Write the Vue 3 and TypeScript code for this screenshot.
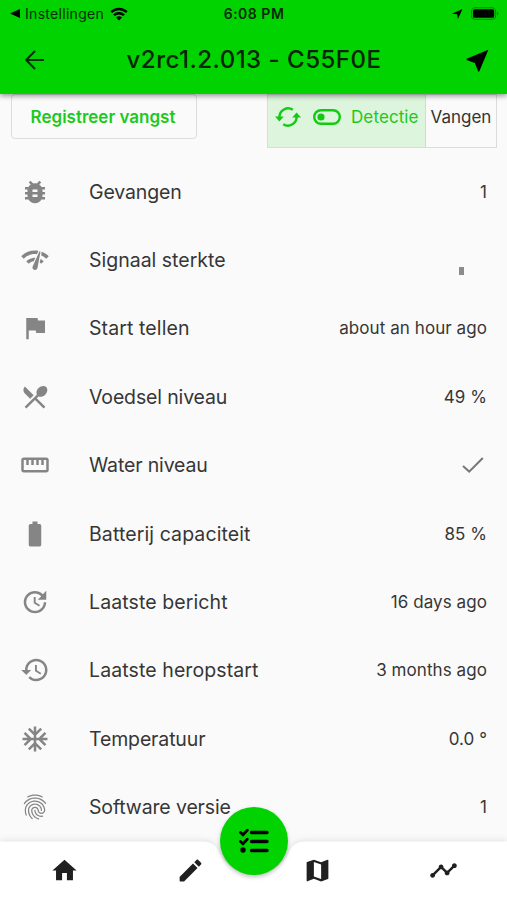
<script setup lang="ts">
interface Row {
  label: string
  icon: string
  value?: string
  kind?: 'signal' | 'check'
  tracking: 'tight' | 'normal' | 'wide'
}

const rows: Row[] = [
  { label: 'Gevangen', value: '1', tracking: 'tight', icon: 'M20 8h-2.81c-.45-.78-1.07-1.45-1.82-1.96L17 4.41 15.59 3l-2.17 2.17C12.96 5.06 12.49 5 12 5c-.49 0-.96.06-1.41.17L8.41 3 7 4.41l1.62 1.63C7.88 6.55 7.26 7.22 6.81 8H4v2h2.09c-.05.33-.09.66-.09 1v1H4v2h2v1c0 .34.04.67.09 1H4v2h2.81c1.04 1.79 2.97 3 5.19 3s4.15-1.21 5.19-3H20v-2h-2.09c.05-.33.09-.66.09-1v-1h2v-2h-2v-1c0-.34-.04-.67-.09-1H20V8zm-6 8h-4v-2h4v2zm0-4h-4v-2h4v2z' },
  { label: 'Signaal sterkte', kind: 'signal', tracking: 'normal', icon: 'M15.9 5c-.17 0-.32.09-.41.23l-.07.15-5.18 11.65c-.16.29-.26.61-.26.96 0 1.11.9 2.01 2.01 2.01.96 0 1.77-.68 1.96-1.59l.01-.03L16.4 5.5c0-.28-.22-.5-.5-.5zM1 9l2 2c2.88-2.88 6.79-4.08 10.53-3.62l1.19-2.68C9.89 3.84 4.74 5.27 1 9zm20 2l2-2c-1.64-1.64-3.55-2.82-5.59-3.57l-.53 2.82c1.5.62 2.9 1.53 4.12 2.75zm-4 4l2-2c-.8-.8-1.7-1.42-2.66-1.89l-.55 2.92c.42.27.83.59 1.21.97zM5 13l2 2c1.13-1.13 2.56-1.79 4.03-2l1.28-2.88c-2.63-.08-5.3.87-7.31 2.88z' },
  { label: 'Start tellen', value: 'about an hour ago', tracking: 'wide', icon: 'M14.4 6L14 4H5v17h2v-7h5.6l.4 2h7V6z' },
  { label: 'Voedsel niveau', value: '49 %', tracking: 'tight', icon: 'M8.1 13.34l2.83-2.83L3.91 3.5c-1.56 1.56-1.56 4.09 0 5.66l4.19 4.18zm6.78-1.81c1.53.71 3.68.21 5.27-1.38 1.91-1.91 2.28-4.65.81-6.12-1.46-1.46-4.2-1.1-6.12.81-1.59 1.59-2.09 3.74-1.38 5.27L3.7 19.87l1.41 1.41L12 14.41l6.88 6.88 1.41-1.41L13.41 13l1.47-1.47z' },
  { label: 'Water niveau', kind: 'check', tracking: 'tight', icon: 'M21 6H3c-1.1 0-2 .9-2 2v8c0 1.1.9 2 2 2h18c1.1 0 2-.9 2-2V8c0-1.1-.9-2-2-2zm0 10H3V8h2v4h2V8h2v4h2V8h2v4h2V8h2v4h2V8h2v8z' },
  { label: 'Batterij capaciteit', value: '85 %', tracking: 'wide', icon: 'M15.67 4H14V2h-4v2H8.33C7.6 4 7 4.6 7 5.33v15.33C7 21.4 7.6 22 8.33 22h7.33c.74 0 1.34-.6 1.34-1.33V5.33C17 4.6 16.4 4 15.67 4z' },
  { label: 'Laatste bericht', value: '16 days ago', tracking: 'wide', icon: 'M21 10.12h-6.78l2.74-2.82c-2.73-2.7-7.15-2.8-9.88-.1-2.73 2.71-2.73 7.08 0 9.79s7.15 2.71 9.88 0C18.32 15.65 19 14.08 19 12.1h2c0 1.98-.88 4.55-2.64 6.29-3.51 3.48-9.21 3.48-12.72 0-3.5-3.47-3.53-9.11-.02-12.58s9.14-3.47 12.65 0L21 3v7.12zM12.5 8v4.25l3.5 2.08-.72 1.21L11 13V8h1.5z' },
  { label: 'Laatste heropstart', value: '3 months ago', tracking: 'wide', icon: 'M13 3c-4.97 0-9 4.03-9 9H1l3.89 3.89.07.14L9 12H6c0-3.87 3.13-7 7-7s7 3.13 7 7-3.13 7-7 7c-1.93 0-3.68-.79-4.94-2.06l-1.42 1.42C8.27 19.99 10.51 21 13 21c4.97 0 9-4.03 9-9s-4.03-9-9-9zm-1 5v5l4.28 2.54.72-1.21-3.5-2.08V8H12z' },
  { label: 'Temperatuur', value: '0.0 °', tracking: 'tight', icon: 'M22 11h-4.17l3.24-3.24-1.41-1.42L15 11h-2V9l4.66-4.66-1.42-1.41L13 6.17V2h-2v4.17L7.76 2.93 6.34 4.34 11 9v2H9L4.34 6.34 2.93 7.76 6.17 11H2v2h4.17l-3.24 3.24 1.41 1.42L9 13h2v2l-4.66 4.66 1.42 1.41L11 17.83V22h2v-4.17l3.24 3.24 1.42-1.41L13 15v-2h2l4.66 4.66 1.41-1.42L17.83 13H22z' },
  { label: 'Software versie', value: '1', tracking: 'tight', icon: 'M17.81 4.47c-.08 0-.16-.02-.23-.06C15.66 3.42 14 3 12.01 3c-1.98 0-3.86.47-5.57 1.41-.24.13-.54.04-.68-.2-.13-.24-.04-.55.2-.68C7.82 2.52 9.86 2 12.01 2c2.13 0 3.99.47 6.03 1.52.25.13.34.43.21.67-.09.18-.26.28-.44.28zM3.5 9.72c-.1 0-.2-.03-.29-.09-.23-.16-.28-.47-.12-.7.99-1.4 2.25-2.5 3.75-3.27C9.98 4.04 14 4.03 17.15 5.65c1.5.77 2.76 1.86 3.75 3.25.16.22.11.54-.12.7-.23.16-.54.11-.7-.12-.9-1.26-2.04-2.25-3.39-2.94-2.87-1.47-6.54-1.47-9.4.01-1.36.7-2.5 1.7-3.4 2.96-.08.14-.23.21-.39.21zm6.25 12.07c-.13 0-.26-.05-.35-.15-.87-.87-1.34-1.43-2.01-2.64-.69-1.23-1.05-2.73-1.05-4.34 0-2.97 2.54-5.39 5.66-5.39s5.66 2.42 5.66 5.39c0 .28-.22.5-.5.5s-.5-.22-.5-.5c0-2.42-2.09-4.39-4.66-4.39-2.57 0-4.66 1.97-4.66 4.39 0 1.44.32 2.77.93 3.85.64 1.15 1.08 1.64 1.85 2.42.19.2.19.51 0 .71-.11.1-.24.15-.37.15zm7.17-1.85c-1.19 0-2.24-.3-3.1-.89-1.49-1.01-2.38-2.65-2.38-4.39 0-.28.22-.5.5-.5s.5.22.5.5c0 1.41.72 2.74 1.94 3.56.71.48 1.54.71 2.54.71.24 0 .64-.03 1.04-.1.27-.05.53.13.58.41.05.27-.13.53-.41.58-.57.11-1.07.12-1.21.12zM14.91 22c-.04 0-.09-.01-.13-.02-1.59-.44-2.63-1.03-3.72-2.1-1.4-1.39-2.17-3.24-2.17-5.22 0-1.62 1.38-2.94 3.08-2.94 1.7 0 3.08 1.32 3.08 2.94 0 1.07.93 1.94 2.08 1.94s2.08-.87 2.08-1.94c0-3.77-3.25-6.83-7.25-6.83-2.84 0-5.44 1.58-6.61 4.03-.39.81-.59 1.76-.59 2.8 0 .78.07 2.01.67 3.61.1.26-.03.55-.29.64-.26.1-.55-.04-.64-.29-.49-1.31-.73-2.61-.73-3.96 0-1.2.23-2.29.68-3.24 1.33-2.79 4.28-4.6 7.51-4.6 4.55 0 8.25 3.51 8.25 7.83 0 1.62-1.38 2.94-3.08 2.94s-3.08-1.32-3.08-2.94c0-1.07-.93-1.94-2.08-1.94s-2.08.87-2.08 1.94c0 1.71.66 3.31 1.87 4.51.95.94 1.86 1.46 3.27 1.85.27.07.42.35.35.61-.05.23-.26.38-.47.38z' },
]

const tabs: string[] = [
  'M10 20v-6h4v6h5v-8h3L12 3 2 12h3v8z',
  'M3 17.46v3.04c0 .28.22.5.5.5h3.04c.13 0 .26-.05.35-.15L17.81 9.94l-3.75-3.75L3.15 17.1c-.1.1-.15.22-.15.36zM20.71 7.04c.39-.39.39-1.02 0-1.41l-2.34-2.34c-.39-.39-1.02-.39-1.41 0l-1.83 1.83 3.75 3.75 1.83-1.83z',
  'M20.5 3l-.16.03L15 5.1 9 3 3.36 4.9c-.21.07-.36.25-.36.48V20.5c0 .28.22.5.5.5l.16-.03L9 18.9l6 2.1 5.64-1.9c.21-.07.36-.25.36-.48V3.5c0-.28-.22-.5-.5-.5zM15 19l-6-2.11V5l6 2.11V19z',
  'M23 8c0 1.1-.9 2-2 2-.18 0-.35-.02-.51-.07l-3.56 3.55c.05.16.07.34.07.52 0 1.1-.9 2-2 2s-2-.9-2-2c0-.18.02-.36.07-.52l-2.55-2.55c-.16.05-.34.07-.52.07s-.36-.02-.52-.07l-4.55 4.56c.05.16.07.33.07.51 0 1.1-.9 2-2 2s-2-.9-2-2 .9-2 2-2c.18 0 .35.02.51.07l4.56-4.55C8.02 9.36 8 9.18 8 9c0-1.1.9-2 2-2s2 .9 2 2c0 .18-.02.36-.07.52l2.55 2.55c.16-.05.34-.07.52-.07s.36.02.52.07l3.55-3.56C19.02 8.35 19 8.18 19 8c0-1.1.9-2 2-2s2 .9 2 2z',
]
</script>

<template>
  <div class="screen">
    <header class="top">
      <div class="status">
        <div class="status-left">
          <svg class="caret" viewBox="0 0 10 9"><path d="M0 4.5L10 0v9z" /></svg>
          <span class="back-app">Instellingen</span>
          <svg class="wifi" viewBox="0 0 18 14">
            <path class="arc" d="M1.2 5.2a11 11 0 0 1 15.6 0M4 8.2a7.2 7.2 0 0 1 10 0" />
            <path d="M9 13.6l-3-3a4.4 4.4 0 0 1 6 0z" />
          </svg>
        </div>
        <span class="clock">6:08 PM</span>
        <div class="status-right">
          <svg class="loc" viewBox="0 0 12 12"><path d="M11.5.5L0 5.600l5.700.7.7 5.200z" /></svg>
          <svg class="batt" viewBox="0 0 29 13">
            <rect class="shell" x=".5" y=".5" width="25" height="12" rx="3.5" />
            <rect x="2" y="2" width="22" height="9" rx="2" />
            <path class="tip" d="M27 4.3q1.5.8 1.5 2.2T27 8.7z" />
          </svg>
        </div>
      </div>
      <div class="bar">
        <svg class="back" viewBox="0 0 20 20"><path d="M19 10H1.500M10 1L1.200 10l8.800 9" /></svg>
        <h1 class="title">v2rc1.2.013 - C55F0E</h1>
        <svg class="near" viewBox="0 0 24 24"><path d="M21 3L3 10.530v.98l6.840 2.650L12.480 21h.98L21 3z" /></svg>
      </div>
    </header>

    <section class="actions">
      <button class="register"><span>Registreer vangst</span></button>
      <div class="modes">
        <div class="mode on">
          <svg class="sync" viewBox="0 0 26 20">
            <path class="line" d="M17.8 2.800A8.700 8.700 0 0 0 4.400 10M8.200 17.200A8.700 8.700 0 0 0 21.600 10" />
            <path d="M0 9.600h8.800l-4.400 5zM17.200 10.400h8.800l-4.400-5z" />
          </svg>
          <svg class="toggle" viewBox="0 0 28 16">
            <rect x="1.2" y="1.2" width="25.6" height="13.6" rx="6.8" />
            <circle cx="8" cy="8" r="3.6" />
          </svg>
          <span class="det">Detectie</span>
        </div>
        <div class="mode off"><span>Vangen</span></div>
      </div>
    </section>

    <main class="list">
      <div v-for="row in rows" :key="row.label" class="row">
        <svg class="icon" viewBox="0 0 24 24"><path :d="row.icon" /></svg>
        <span class="label" :class="row.tracking">{{ row.label }}</span>
        <span v-if="row.value" class="value">{{ row.value }}</span>
        <span v-else-if="row.kind === 'signal'" class="signal"></span>
        <svg v-else class="check" viewBox="0 0 22 16"><path d="M1 9l6.200 5.600L20.800 1" /></svg>
      </div>
    </main>

    <nav class="nav">
      <svg class="sheet" viewBox="0 0 507 62">
        <path d="M0 3.500H202Q215 3.500 218.500 13A38.500 38.500 0 0 0 289.500 13Q293 3.500 306 3.500H507V62H0z" />
      </svg>
      <div class="tabs">
        <svg v-for="tab in tabs" :key="tab" class="tab" viewBox="0 0 24 24"><path :d="tab" /></svg>
      </div>
      <div class="fab">
        <svg viewBox="0 0 30 26">
          <path class="tick" d="M1.500 4.500l2.500 2.300L8.300 2.200M1.500 13.500l2.500 2.300 4.300-4.600" />
          <circle cx="4" cy="22" r="2.700" />
          <path class="rule" d="M12.500 4.500H28M12.500 13.500H28M12.500 22.500H28" />
        </svg>
      </div>
    </nav>
  </div>
</template>

<style>
body {
  margin: 0;
  background: #fafafa;
}
</style>

<style scoped>
.screen {
  position: relative;
  display: flex;
  flex-direction: column;
  width: 507px;
  height: 900px;
  overflow: hidden;
  background: #fafafa;
  font-family: Inter, "Liberation Sans", sans-serif;
  color: #333;
}
svg {
  display: block;
  flex: none;
}
.top {
  position: relative;
  z-index: 2;
  height: 94px;
  flex: none;
  background: #00d300;
  box-shadow: 0 2px 5px rgba(0, 0, 0, 0.4);
}
.status {
  display: grid;
  grid-template-columns: 1fr auto 1fr;
  align-items: center;
  height: 27px;
  padding: 0 8px 0 10px;
  font-size: 14px;
  color: #062b06;
}
.status-left,
.status-right {
  display: flex;
  align-items: center;
}
.status-right {
  justify-content: flex-end;
  gap: 8px;
}
.caret {
  width: 10px;
  height: 9px;
}
.back-app {
  margin-left: 5px;
  letter-spacing: 0.3px;
}
.wifi {
  width: 18px;
  height: 14px;
  margin-left: 6px;
}
.arc {
  fill: none;
  stroke: #000;
  stroke-width: 2.4;
}
.clock {
  font-weight: 600;
  letter-spacing: 0.5px;
}
.status .clock {
  margin-right: 1px;
}
.loc {
  width: 11px;
  height: 12px;
}
.batt {
  width: 28px;
  height: 13px;
}
.shell {
  fill: none;
  stroke: #087c08;
}
.tip {
  fill: #087c08;
}
.bar {
  display: flex;
  align-items: center;
  justify-content: space-between;
  height: 66px;
  padding: 0 15px 0 25px;
}
.back {
  width: 20px;
  height: 20px;
  fill: none;
  stroke: #072c07;
  stroke-width: 2;
}
.title {
  margin: 0;
  font-size: 24px;
  font-weight: 500;
  line-height: 30px;
  letter-spacing: 0.5px;
  color: #072507;
}
.near {
  width: 29px;
  height: 29px;
}
.actions {
  display: flex;
  justify-content: space-between;
  align-items: flex-start;
  height: 63.5px;
  flex: none;
  padding: 0 10px 0 11px;
}
.register {
  box-sizing: border-box;
  width: 186px;
  height: 45px;
  padding: 0 2px 0 0;
  border: 1px solid #dcdcdc;
  border-radius: 4px;
  background: transparent;
  font: 600 17px/44px Inter, "Liberation Sans", sans-serif;
  color: #1cc91c;
}
.modes {
  display: flex;
  box-sizing: border-box;
  width: 230px;
  height: 54px;
  border: 1px solid #d9dcd9;
}
.mode {
  display: flex;
  align-items: center;
  box-sizing: border-box;
  padding-bottom: 9px;
  font-size: 17px;
}
.on {
  width: 158px;
  padding-left: 7px;
  border-right: 1px solid #d5d9d5;
  background: #ddf4dd;
  color: #1cc91c;
}
.off {
  flex: 1;
  justify-content: center;
  color: #333;
}
.sync {
  width: 26px;
  height: 20px;
  fill: #10cc10;
}
.line {
  fill: none;
  stroke: #10cc10;
  stroke-width: 2.4;
}
.toggle {
  width: 28px;
  height: 16px;
  margin-left: 12px;
  fill: #10cc10;
}
.toggle rect {
  fill: none;
  stroke: #10cc10;
  stroke-width: 2.4;
}
.det {
  margin-left: 10px;
  letter-spacing: 0.1px;
}
.row {
  display: flex;
  align-items: center;
  box-sizing: border-box;
  height: 68.4px;
  padding: 0 20px;
}
.icon {
  width: 30px;
  height: 30px;
  fill: #858585;
}
.label {
  margin-left: 39px;
  font-size: 19.5px;
  color: #363636;
  white-space: nowrap;
}
.tight {
  letter-spacing: -0.14px;
}
.wide {
  letter-spacing: 0.1px;
}
.value {
  margin-left: auto;
  font-size: 17px;
  letter-spacing: 0.07px;
  color: #363636;
  white-space: nowrap;
}
.signal {
  width: 5px;
  height: 8px;
  margin: 22px 23px 0 auto;
  background: #8c8c8c;
}
.check {
  width: 22px;
  height: 16px;
  margin: 0 3px 0 auto;
  fill: none;
  stroke: #777;
  stroke-width: 2;
}
.nav {
  position: absolute;
  z-index: 3;
  left: 0;
  bottom: 0;
  width: 507px;
  height: 62px;
}
.sheet {
  position: absolute;
  inset: 0;
  width: 507px;
  height: 62px;
  overflow: visible;
  fill: #fff;
  filter: drop-shadow(0 -1px 3px rgba(0, 0, 0, 0.1));
}
.tabs {
  position: relative;
  display: grid;
  grid-template-columns: repeat(4, 1fr);
  justify-items: center;
  align-items: center;
  height: 65px;
  padding-left: 1px;
}
.tab {
  width: 29px;
  height: 29px;
  fill: #202020;
}
.fab {
  position: absolute;
  left: 220px;
  top: -31px;
  display: flex;
  align-items: center;
  justify-content: center;
  width: 68px;
  height: 68px;
  border-radius: 50%;
  background: #00d300;
  box-shadow: 0 2px 4px rgba(0, 0, 0, 0.25);
}
.fab svg {
  width: 30px;
  height: 26px;
}
.tick,
.rule {
  fill: none;
  stroke: #000;
  stroke-width: 2.8;
  stroke-linecap: round;
}
.rule {
  stroke-width: 3.3;
}
</style>
